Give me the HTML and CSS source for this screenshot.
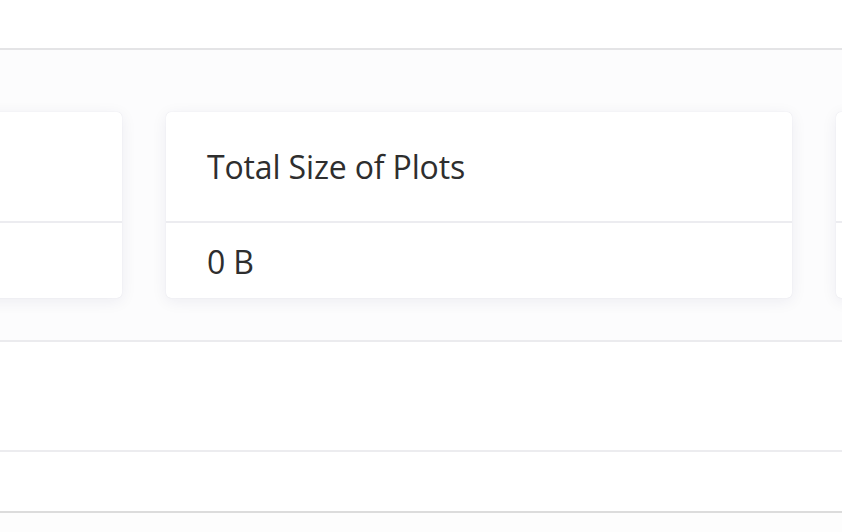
FILE: index.html
```html
<!DOCTYPE html>
<html lang="en">
<head>
<meta charset="utf-8">
<title>Stats</title>
<link rel="stylesheet" href="styles.css">
</head>
<body>
<header class="topbar"></header>
<section class="stats">
  <div class="stats-row">
    <div class="card">
      <div class="card-head"></div>
      <div class="card-body"></div>
    </div>
    <div class="card">
      <div class="card-head"><span class="card-title">Total Size of Plots</span></div>
      <div class="card-body"><span class="card-value">0 B</span></div>
    </div>
    <div class="card">
      <div class="card-head"></div>
      <div class="card-body"></div>
    </div>
  </div>
</section>
<section class="panel"></section>
<section class="panel-row"></section>
<footer class="bottom"></footer>
</body>
</html>
```

FILE: styles.css
```css
* { box-sizing: border-box; }
html, body { margin: 0; padding: 0; }
body {
  background: #ffffff;
  font-family: "Open Sans", "Noto Sans", sans-serif;
  color: #303030;
  overflow: hidden;
  width: 842px;
  height: 532px;
}
.topbar {
  height: 50px;
  border-bottom: 2px solid #e4e4e6;
  background: #ffffff;
}
.stats {
  height: 292px;
  background: #fcfcfd;
  border-bottom: 2px solid #ebebee;
  padding-top: 62px;
  overflow: hidden;
}
.stats-row {
  display: flex;
  gap: 44px;
  margin-left: -504px;
}
.card {
  flex: 0 0 626px;
  height: 186px;
  background: #ffffff;
  border-radius: 5px;
  box-shadow: 0 3px 16px rgba(30, 30, 80, 0.07), 0 0 1px rgba(30, 30, 80, 0.14);
  display: flex;
  flex-direction: column;
}
.card-head {
  height: 111px;
  border-bottom: 2px solid #ececf0;
  padding: 0 41px;
  display: flex;
  align-items: center;
}
.card-body {
  flex: 1;
  padding: 0 41px;
  display: flex;
  align-items: center;
}
.card-title, .card-value {
  font-size: 32px;
  line-height: 1;
  letter-spacing: -0.15px;
  color: #2e2e2e;
}
.card-value {
  position: relative;
  top: 1px;
}
.panel {
  height: 110px;
  border-bottom: 2px solid #ececef;
  background: #ffffff;
}
.panel-row {
  height: 61px;
  border-bottom: 2px solid #dcdcdc;
  background: #ffffff;
}
.bottom {
  height: 40px;
  background: #fdfdfd;
}
```
